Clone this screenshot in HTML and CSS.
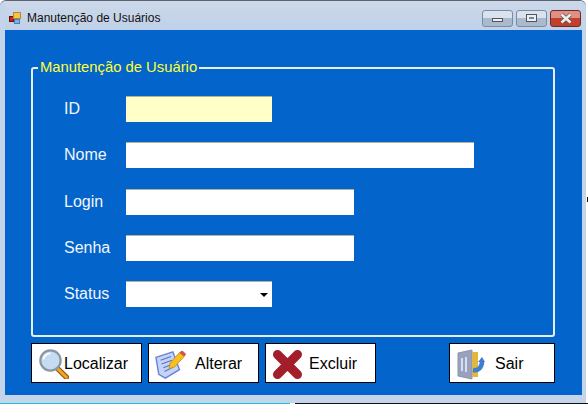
FILE: index.html
```html
<!DOCTYPE html>
<html lang="pt-BR">
<head>
    <meta charset="UTF-8">
    <meta name="viewport" content="width=device-width, initial-scale=1.0">
    <title>Manutenção de Usuários</title>
    <link rel="stylesheet" href="styles.css">
</head>
<body>
    <div class="window">
        <div class="title-bar">
            <svg class="app-icon" width="13" height="13" viewBox="0 0 13 13">
                <rect x="0.5" y="4.5" width="4" height="5" fill="#c22" stroke="#611"/>
                <rect x="4.5" y="0.5" width="7" height="6" fill="#f5c542" stroke="#b58a2a"/>
                <rect x="5.5" y="7.5" width="5" height="4" fill="#7db2e8" stroke="#4a7eb8"/>
            </svg>
            <span class="title-text">Manutenção de Usuários</span>
            <div class="win-buttons">
                <div class="win-btn"><span class="min-glyph"></span></div>
                <div class="win-btn"><span class="max-glyph"></span></div>
                <div class="win-btn close-btn">
                    <svg width="14" height="11" viewBox="0 0 14 11"><path d="M2.5 1.5l9 8M11.500 1.5l-9 8" stroke="#555" stroke-width="4" fill="none"/><path d="M2.5 1.5l9 8M11.500 1.5l-9 8" stroke="#eee" stroke-width="2.6" fill="none"/></svg>
                </div>
            </div>
        </div>

        <div class="client">
            <fieldset class="group">
                <legend>Manutenção de Usuário</legend>
                <div class="form-rows">
                    <div class="form-row">
                        <label>ID</label>
                        <input class="field field-id" type="text">
                    </div>
                    <div class="form-row">
                        <label>Nome</label>
                        <input class="field field-long" type="text">
                    </div>
                    <div class="form-row">
                        <label>Login</label>
                        <input class="field field-mid" type="text">
                    </div>
                    <div class="form-row">
                        <label>Senha</label>
                        <input class="field field-mid" type="text">
                    </div>
                    <div class="form-row">
                        <label>Status</label>
                        <div class="field field-combo"><span class="combo-arrow"></span></div>
                    </div>
                </div>
            </fieldset>

            <div class="actions">
                <button class="btn btn-localizar">
                    <svg width="30" height="30" viewBox="0 0 34 34">
                        <path d="M22 23l9 9" stroke="#8a5a10" stroke-width="6" stroke-linecap="round"/>
                        <path d="M22 23l9 9" stroke="#f5a623" stroke-width="3.5" stroke-linecap="round"/>
                        <circle cx="13" cy="13" r="11.5" fill="#c6dcf2" stroke="#8b97a5" stroke-width="2.5"/>
                        <path d="M5 12a8 8 0 0 1 8-7" stroke="#fff" stroke-width="2" fill="none"/>
                    </svg>
                    <span>Localizar</span>
                </button>
                <button class="btn btn-alterar">
                    <svg width="32" height="32" viewBox="0 0 34 34">
                        <path d="M1 10l18-6 7 19-15 9-7-4z" fill="#c4d4f6" stroke="#6a82d8" stroke-width="1.5"/>
                        <path d="M6 13l11-4M7 17l11-4M9 21l10-4M10 25l8-4" stroke="#5a72c8" stroke-width="1.2"/>
                        <path d="M15 22l1-6L26 5l5 4-10 11z" fill="#f5c020" stroke="#c89020"/>
                        <path d="M26 5l2-2c2 0 4 2 5 4l-2 2z" fill="#d8504a"/>
                    </svg>
                    <span>Alterar</span>
                </button>
                <button class="btn btn-excluir">
                    <svg width="31" height="31" viewBox="0 0 31 31">
                        <path d="M5.500 5.500l20 20M25.500 5.500l-20 20" stroke="#a31d2a" stroke-width="9" stroke-linecap="round"/>
                    </svg>
                    <span>Excluir</span>
                </button>
                <button class="btn btn-sair">
                    <svg width="29" height="31" viewBox="0 0 29 31">
                        <path d="M1 4l14-3v29l-14-3z" fill="#98a2c0" stroke="#8a94b0"/>
                        <path d="M15 3h6v25h-6z" fill="#e0b840"/>
                        <path d="M5 9v13M9 8v15" stroke="#d8deec" stroke-width="2"/>
                        <path d="M16 21c6 1 9-3 9-9" stroke="#3f7fd0" stroke-width="4.500" fill="none"/>
                        <path d="M21 13l4-5 3 5z" fill="#3f7fd0"/>
                    </svg>
                    <span>Sair</span>
                </button>
            </div>
        </div>
    </div>
    <div class="bottom-line"><span class="size-handle"></span></div>
    <span class="side-handle"></span>
</body>
</html>
```

FILE: styles.css
```css
html, body {
    margin: 0;
    padding: 0;
}

body {
    position: relative;
    width: 588px;
    height: 404px;
    overflow: hidden;
    background: #fff;
    font-family: "Liberation Sans", Arial, sans-serif;
}

.window {
    width: 586px;
    height: 403px;
    box-sizing: border-box;
    padding: 0 4px 8px 5px;
    display: flex;
    flex-direction: column;
    background: #c4d4ea;
    border-top: 1px solid #5b6470;
    border-radius: 6px 6px 0 0;
}

.title-bar {
    height: 29px;
    flex: none;
    box-sizing: border-box;
    padding-top: 5px;
    display: flex;
    align-items: center;
    background: linear-gradient(#cdd9ea, #bfd0e8);
}

.app-icon {
    margin: 0 5px 0 4px;
}

.title-text {
    font-size: 12px;
    color: #111;
}

.win-buttons {
    margin-left: auto;
    margin-right: 1px;
    display: flex;
    gap: 3px;
}

.win-btn {
    width: 29px;
    height: 15px;
    border: 1px solid #7d8aa0;
    border-radius: 3px;
    background: linear-gradient(#d9e3f0 50%, #a9bacf 50%);
    display: flex;
    align-items: center;
    justify-content: center;
}

.close-btn {
    border-color: #6e2a2a;
    background: linear-gradient(#e08f80 45%, #c0402c 50%);
}

.min-glyph {
    width: 9px;
    height: 2px;
    background: #eee;
    border: 1px solid #555;
    margin-top: 3px;
}

.max-glyph {
    width: 5px;
    height: 2px;
    background: #6a8ab0;
    border: 2px solid #eee;
    outline: 1px solid #555;
}

.client {
    flex: 1;
    background: #0364cc;
    padding: 30px 27px 0 26px;
}

.group {
    margin: 0;
    padding: 0;
    height: 277px;
    box-sizing: border-box;
    border: 2px solid #e6eef5;
    border-radius: 3px;
    min-width: 0;
}

legend {
    padding: 0 2px;
    margin-left: 5px;
    font-size: 14.8px;
    line-height: 15px;
    color: #ffff33;
}

.form-rows {
    padding: 21px 0 0 31px;
}

.form-row {
    height: 26px;
    margin-bottom: 20.25px;
    display: flex;
    align-items: center;
}

.form-row label {
    width: 62px;
    font-size: 16px;
    color: #f2f6fb;
}

.field {
    height: 26px;
    box-sizing: border-box;
    border: none;
    border-top: 1px solid #b5b09a;
    padding: 0;
    background: #fff;
}

.field-id {
    width: 146px;
    background: #ffffc8;
}

.field-long {
    width: 348px;
}

.field-mid {
    width: 228px;
}

.field-combo {
    width: 146px;
    display: flex;
    align-items: center;
    justify-content: flex-end;
    padding-right: 4px;
}

.combo-arrow {
    width: 0;
    height: 0;
    border-left: 4px solid transparent;
    border-right: 4px solid transparent;
    border-top: 4px solid #000;
}

.actions {
    margin-top: 6px;
    display: flex;
    gap: 6px;
}

.btn {
    height: 40px;
    box-sizing: border-box;
    border: 1px solid #000;
    background: #fff;
    padding: 2px 0 0;
    display: flex;
    align-items: center;
    font-family: "Liberation Sans", Arial, sans-serif;
    font-size: 16px;
    color: #000;
}

.btn svg {
    flex: none;
}

.btn-localizar,
.btn-alterar,
.btn-excluir {
    width: 111px;
}

.btn-localizar svg {
    margin-left: 7px;
}

.btn-localizar span {
    margin-left: -5px;
}

.btn-alterar svg,
.btn-excluir svg {
    margin-left: 6px;
}

.btn-alterar span {
    margin-left: 8px;
}

.btn-excluir span {
    margin-left: 6px;
}

.btn-sair {
    width: 106px;
    margin-left: auto;
}

.btn-sair svg {
    margin-left: 7px;
}

.btn-sair span {
    margin-left: 9px;
}

.bottom-line {
    position: relative;
    height: 1px;
    background: linear-gradient(90deg, #1cc4d4 290px, #111 290px);
}

.size-handle {
    position: absolute;
    left: 290px;
    top: 0;
    width: 5px;
    height: 1px;
    background: #fff;
}

.side-handle {
    position: absolute;
    left: 587px;
    top: 197px;
    width: 1px;
    height: 5px;
    background: #111;
}
```
